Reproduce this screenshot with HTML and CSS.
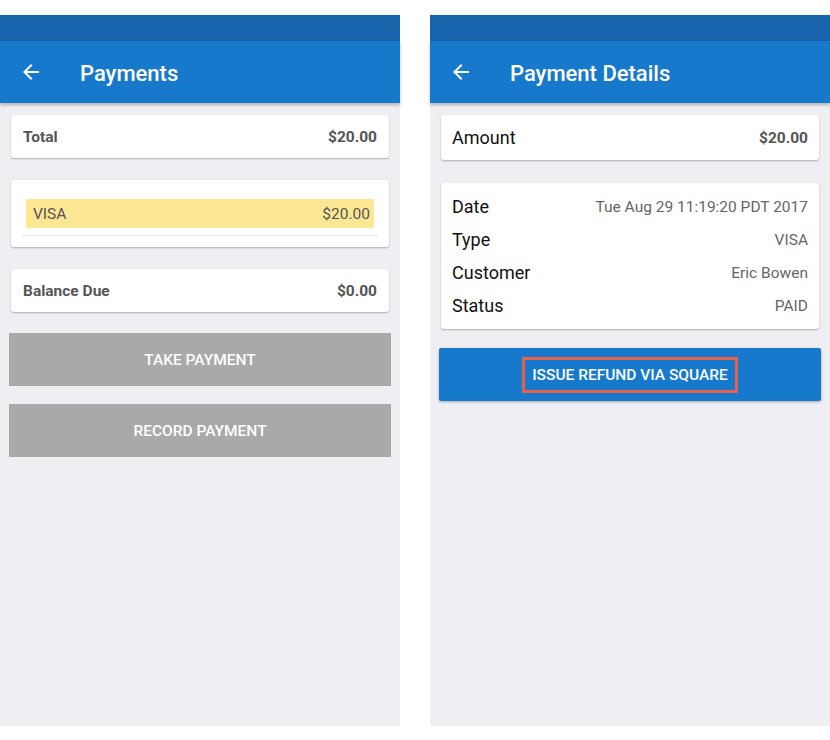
FILE: index.html
```html
<!DOCTYPE html>
<html lang="en">
  <head>
    <meta charset="UTF-8" />
    <title>Payments</title>
    <link rel="stylesheet" href="styles.css">
  </head>
  <body>
    <div class="screens">
      <div class="screen">
        <div class="status-bar"></div>
        <div class="toolbar">
          <svg class="toolbar__back" viewBox="0 0 24 24" width="24" height="24">
            <path d="M20 11H7.83l5.59-5.59L12 4l-8 8 8 8 1.41-1.41L7.83 13H20v-2z" fill="#fff" />
          </svg>
          <div class="toolbar__title">Payments</div>
        </div>
        <div class="content">
          <div class="card card--row">
            <span class="strong">Total</span>
            <span class="strong">$20.00</span>
          </div>
          <div class="card card--list">
            <div class="payment-line">
              <span>VISA</span>
              <span>$20.00</span>
            </div>
            <div class="divider"></div>
          </div>
          <div class="card card--row">
            <span class="strong">Balance Due</span>
            <span class="strong">$0.00</span>
          </div>
          <div class="actions">
            <button class="btn btn--grey">TAKE PAYMENT</button>
            <button class="btn btn--grey">RECORD PAYMENT</button>
          </div>
        </div>
      </div>

      <div class="screen">
        <div class="status-bar"></div>
        <div class="toolbar">
          <svg class="toolbar__back" viewBox="0 0 24 24" width="24" height="24">
            <path d="M20 11H7.83l5.59-5.59L12 4l-8 8 8 8 1.41-1.41L7.83 13H20v-2z" fill="#fff" />
          </svg>
          <div class="toolbar__title">Payment Details</div>
        </div>
        <div class="content">
          <div class="card card--row card--tall">
            <span class="label">Amount</span>
            <span class="strong">$20.00</span>
          </div>
          <div class="card card--details">
            <div class="detail"><span class="label">Date</span><span class="value">Tue Aug 29 11:19:20 PDT 2017</span></div>
            <div class="detail"><span class="label">Type</span><span class="value">VISA</span></div>
            <div class="detail"><span class="label">Customer</span><span class="value">Eric Bowen</span></div>
            <div class="detail"><span class="label">Status</span><span class="value">PAID</span></div>
          </div>
          <div class="actions actions--refund">
            <button class="btn btn--blue"><span class="highlight">ISSUE REFUND VIA SQUARE</span></button>
          </div>
        </div>
      </div>
    </div>
  </body>
</html>
```

FILE: styles.css
```css
* {
  margin: 0;
  padding: 0;
  box-sizing: border-box;
}

body {
  background: #fff;
  font-family: Roboto, "Liberation Sans", sans-serif;
}

.screens {
  display: flex;
  gap: 30px;
  padding-top: 15px;
}

.screen {
  width: 400px;
  height: 711px;
  background: #efeef3;
}

.status-bar {
  height: 26px;
  background: #1763ac;
}

.toolbar {
  height: 62px;
  background: #1779cc;
  display: flex;
  align-items: center;
  padding: 2px 0 0 19px;
  box-shadow: 0 2px 3px rgba(0, 0, 0, 0.25);
  position: relative;
}

.toolbar__back {
  flex: none;
  margin-top: -2px;
}

.toolbar__title {
  margin-left: 37px;
  color: #fff;
  font-size: 22px;
  font-weight: 500;
}

.content {
  padding: 12px 11px;
  display: flex;
  flex-direction: column;
}

.card {
  background: #fff;
  border-radius: 3px;
  box-shadow: 0 1px 2px rgba(0, 0, 0, 0.28);
}

.card + .card {
  margin-top: 22px;
}

.card--row {
  height: 43px;
  display: flex;
  justify-content: space-between;
  align-items: center;
  padding: 0 12px;
}

.card--tall {
  height: 45px;
  padding: 0 11px;
}

.strong {
  font-size: 15.5px;
  font-weight: 700;
  color: #555;
}

.card--list {
  height: 67px;
  padding: 19px 11px 0;
}

.payment-line {
  height: 29px;
  margin: 0 4px;
  padding: 0 4px 0 7px;
  background: #fde792;
  display: flex;
  justify-content: space-between;
  align-items: center;
  font-size: 15.5px;
  color: #555;
}

.divider {
  height: 1px;
  background: #e6e6e6;
  margin-top: 7px;
}

.label {
  font-size: 18px;
  color: #111;
}

.card--details {
  margin-top: 23px !important;
  padding: 7px 11px;
}

.detail {
  height: 33px;
  display: flex;
  justify-content: space-between;
  align-items: center;
}

.value {
  font-size: 15.5px;
  color: #666;
}

.actions {
  margin: 21px -2px 0;
  display: flex;
  flex-direction: column;
  gap: 18px;
}

.actions--refund {
  margin-top: 19px;
}

.btn {
  height: 53px;
  border: none;
  font-family: inherit;
  font-size: 15.5px;
  font-weight: 500;
  color: #fff;
  display: flex;
  justify-content: center;
  align-items: center;
}

.btn--grey {
  background: #a9a9a9;
}

.btn--blue {
  background: #1779cc;
  border-radius: 2px;
  box-shadow: 0 1px 3px rgba(0, 0, 0, 0.3);
}

.highlight {
  border: 3px solid #e8604c;
  padding: 6px 7px;
  line-height: 18px;
}
```
